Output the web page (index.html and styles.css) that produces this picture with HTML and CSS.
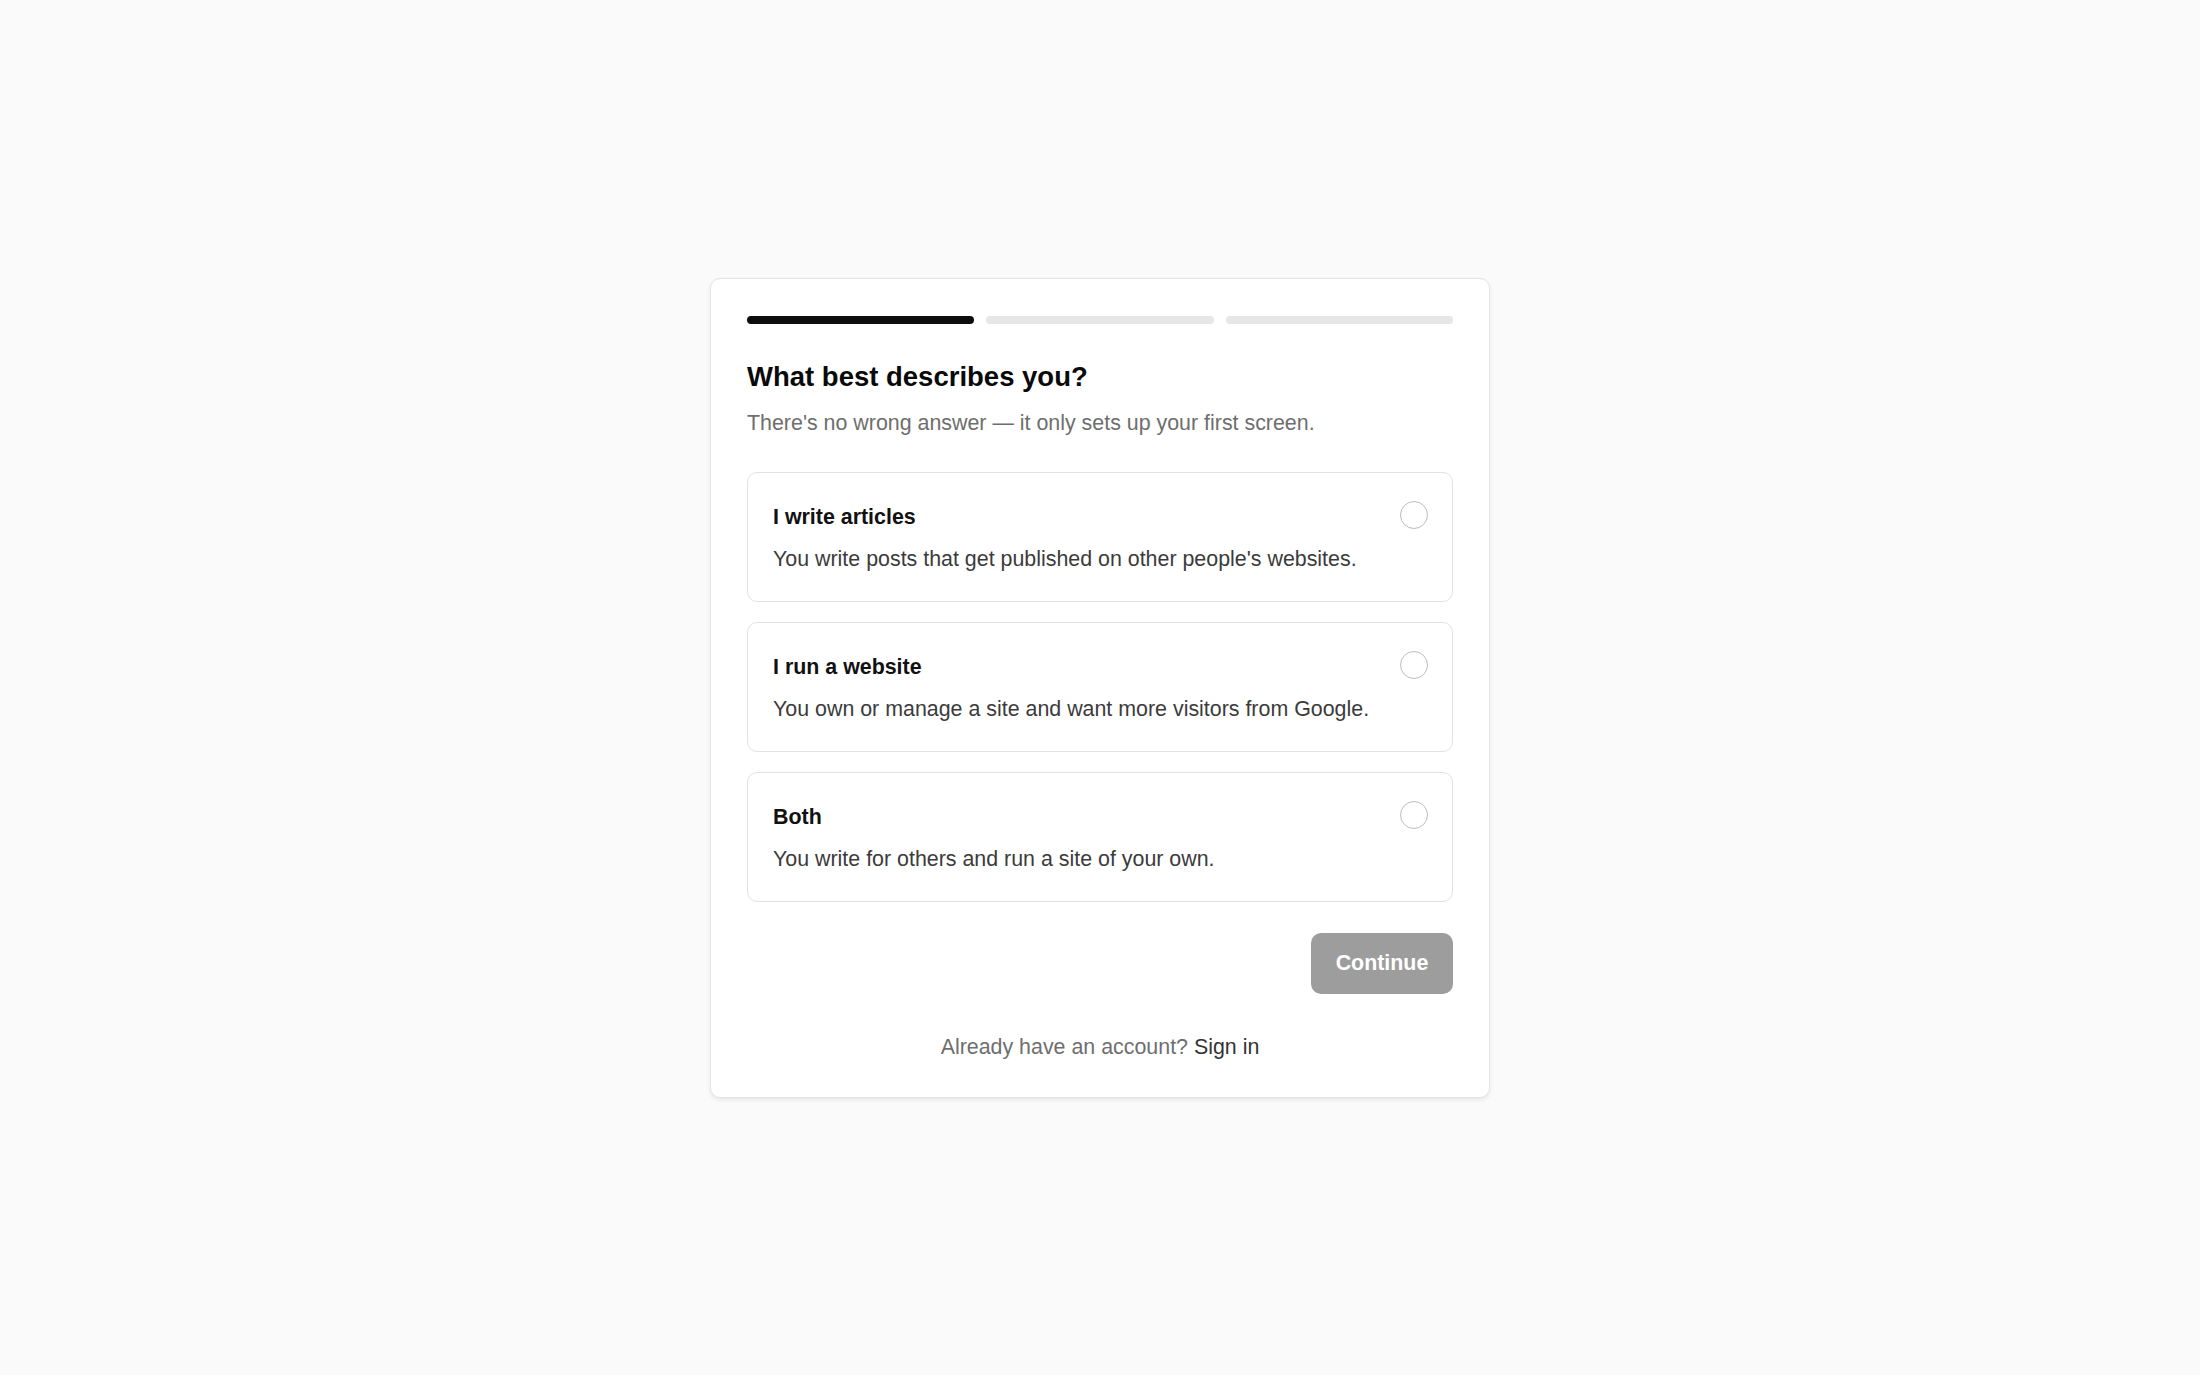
FILE: index.html
```html
<!DOCTYPE html>
<html lang="en">
<head>
<meta charset="utf-8">
<title>What best describes you?</title>
<link rel="stylesheet" href="styles.css">
</head>
<body>
<main class="page">
  <section class="card">
    <div class="progress">
      <span class="step step-active"></span>
      <span class="step"></span>
      <span class="step"></span>
    </div>
    <h1 class="title">What best describes you?</h1>
    <p class="subtitle">There's no wrong answer — it only sets up your first screen.</p>
    <div class="options">
      <div class="option">
        <div class="option-head">
          <span class="option-title">I write articles</span>
          <span class="radio"></span>
        </div>
        <p class="option-desc">You write posts that get published on other people's websites.</p>
      </div>
      <div class="option">
        <div class="option-head">
          <span class="option-title">I run a website</span>
          <span class="radio"></span>
        </div>
        <p class="option-desc">You own or manage a site and want more visitors from Google.</p>
      </div>
      <div class="option">
        <div class="option-head">
          <span class="option-title">Both</span>
          <span class="radio"></span>
        </div>
        <p class="option-desc">You write for others and run a site of your own.</p>
      </div>
    </div>
    <div class="actions">
      <button class="btn-continue" type="button">Continue</button>
    </div>
    <p class="footer">Already have an account? <a class="signin" href="#">Sign in</a></p>
  </section>
</main>
</body>
</html>
```
FILE: styles.css
```css
* { box-sizing: border-box; }
html, body { margin: 0; padding: 0; }
body {
  background: #fafafa;
  font-family: "Liberation Sans", Arial, Helvetica, sans-serif;
  color: #111;
}
.page {
  min-height: 1375px;
  display: flex;
  align-items: center;
  justify-content: center;
}
.card {
  width: 780px;
  background: #fff;
  border: 1px solid #e4e4e4;
  border-radius: 10px;
  box-shadow: 0 2px 4px rgba(0,0,0,0.08);
  padding: 37px 36px 35px;
}
.progress {
  display: flex;
  gap: 12px;
}
.step {
  flex: 1;
  height: 8px;
  border-radius: 4px;
  background: #e6e6e6;
}
.step-active { background: #0d0d0d; }
.title {
  margin: 37px 0 0;
  font-size: 27.5px;
  line-height: 32px;
  font-weight: 700;
  color: #0a0a0a;
}
.subtitle {
  margin: 15px 0 0;
  font-size: 21.4px;
  line-height: 30px;
  color: #6e6e6e;
}
.options {
  margin-top: 34px;
  display: flex;
  flex-direction: column;
  gap: 20px;
}
.option {
  border: 1px solid #e2e2e2;
  border-radius: 10px;
  padding: 29px 24px 27px 25px;
}
.option-head {
  display: flex;
  justify-content: space-between;
  align-items: center;
}
.option-title {
  font-size: 21.4px;
  line-height: 30px;
  font-weight: 700;
  color: #111;
}
.radio {
  width: 28px;
  height: 28px;
  border-radius: 50%;
  border: 1.5px solid #bcbcbc;
  margin-top: -4px;
}
.option-desc {
  margin: 12px 0 0;
  font-size: 21.4px;
  line-height: 30px;
  color: #3b3b3b;
}
.actions {
  margin-top: 31px;
  display: flex;
  justify-content: flex-end;
}
.btn-continue {
  width: 142px;
  height: 61px;
  border: 0;
  border-radius: 10px;
  background: #9d9d9d;
  color: #fff;
  font-family: "Liberation Sans", Arial, Helvetica, sans-serif;
  font-size: 21.4px;
  font-weight: 700;
  cursor: not-allowed;
}
.footer {
  margin: 38px 0 0;
  text-align: center;
  font-size: 21.4px;
  line-height: 30px;
  color: #6e6e6e;
}
.signin {
  color: #333;
  text-decoration: none;
}
```
